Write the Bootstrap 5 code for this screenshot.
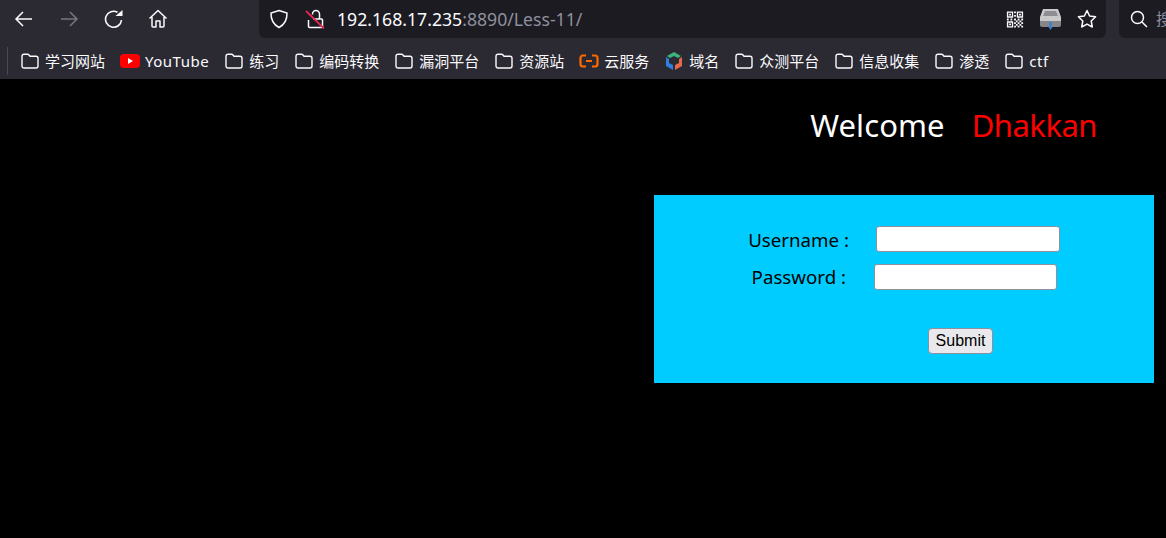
<!DOCTYPE html>
<html lang="zh">
<head>
<meta charset="utf-8">
<title>Less-11</title>
<link rel="stylesheet" href="https://cdn.jsdelivr.net/npm/bootstrap@5.3.0/dist/css/bootstrap.min.css">
<style>
html,body{height:100%;overflow:hidden}
body{background:#000;font-family:"Noto Sans","Noto Sans CJK SC",sans-serif;color:#000}
.chrome-top{height:42px;background:#2b2a33;color:#fbfbfe}
.tool-btn{width:45px;height:38px;flex:none}
.tool-btn svg,.url-icon svg{display:block}
.nav-group{width:259px;padding-left:1px;flex:none}
.url-field{width:847px;height:38px;background:#1c1b22;border-radius:0 0 6px 6px;padding-left:10px;padding-right:9px;flex:none}
.url-icon{flex:none;width:20px}
.url-text{font-size:17.65px;line-height:40px;margin-left:12px;white-space:nowrap;color:#fbfbfe}
.url-dim{color:#8f8f9d}
.search-field{width:60px;height:38px;background:#1c1b22;border-radius:0 0 0 6px;margin-left:13px;padding-left:11px;flex:none;overflow:hidden;white-space:nowrap;font-size:16px;color:#8f8f9d}
.marks{height:37px;background:#2b2a33;color:#fbfbfe;font-size:15px;padding-left:7px;white-space:nowrap}
.marks-sep{width:1px;height:28px;background:#4a4950;margin-right:13px}
.mark-item{gap:6px;margin-right:16px;line-height:20px}
.mark-item svg{flex:none;display:block}
.mark-item.gap-tight{gap:5px;margin-left:-1px}
.latin-label{letter-spacing:.5px}
.greeting{height:116px;padding-top:24px;padding-right:69px;font-size:31px;line-height:44px;gap:27px}
.greet-a{color:#fff;letter-spacing:.1px}
.greet-b{color:#f00;letter-spacing:-.5px}
.login-wrap{padding-right:12px}
.login-box{width:500px;height:188px;background:#0cf;padding-top:31px;font-size:18.7px}
.login-line{height:38px}
.login-line label{text-align:right;line-height:28px}
.login-line input{height:26px;border:1px solid #8f8f9d;border-radius:3px;background:#fff;padding:0 2px;outline:0}
.line-user label{width:195px;margin-right:27px}
.line-user input{width:184px}
.line-pass label{width:192px;margin-right:28px;line-height:26px!important}
.line-pass input{width:183px}
.submit-line{padding-left:274px;padding-top:26px}
.submit-go{width:65px;height:26px;padding:0;border:1px solid #8f8f9d;border-radius:4px;background:#e9e9ed;color:#000;font-size:16px;line-height:22px;font-family:"Liberation Sans",sans-serif}
</style>
</head>
<body>
<svg width="0" height="0" class="position-absolute">
<symbol id="folder" viewBox="0 0 18 16"><path d="M1 3.200C1 2 1.800 1.200 3 1.200h3.600c.6 0 1 .3 1.400.8l1 1.300h6c1.200 0 2 .8 2 2V13c0 1.200-.8 2-2 2H3c-1.200 0-2-.8-2-2z" fill="none" stroke="#fbfbfe" stroke-width="1.400"/></symbol>
</svg>

<header class="chrome-top d-flex align-items-start">
  <nav class="nav-group d-flex">
    <div class="tool-btn d-flex align-items-center justify-content-center"><svg width="20" height="20" viewBox="0 0 20 20" fill="none" stroke="#fbfbfe" stroke-width="1.500"><path d="M18 10H2M9 3l-7 7 7 7"/></svg></div>
    <div class="tool-btn d-flex align-items-center justify-content-center"><svg width="20" height="20" viewBox="0 0 20 20" fill="none" stroke="#77767e" stroke-width="1.500"><path d="M2 10h16M11 3l7 7-7 7"/></svg></div>
    <div class="tool-btn d-flex align-items-center justify-content-center"><svg width="20" height="20" viewBox="0 0 20 20" fill="none" stroke="#fbfbfe" stroke-width="1.600"><path d="M17.500 11A8 8 0 1 1 13.500 3.300"/><path d="M11.500 7h7V1z" fill="#fbfbfe" stroke="none"/></svg></div>
    <div class="tool-btn d-flex align-items-center justify-content-center"><svg width="20" height="20" viewBox="0 0 20 20" fill="none" stroke="#fbfbfe" stroke-width="1.500" stroke-linejoin="round"><path d="M.5 9.500 9 1.500l8.500 8M3 8v9c0 .7.400 1 1 1h3v-6h4v6h3c.6 0 1-.3 1-1V8"/></svg></div>
  </nav>
  <div class="url-field d-flex align-items-center">
    <div class="url-icon"><svg width="20" height="20" viewBox="0 0 20 20" fill="none" stroke="#fbfbfe" stroke-width="1.500"><path d="M10 1.500 18 4c.2 6.500-2.300 11.500-8 14.500C4.300 15.500 1.800 10.500 2 4z"/></svg></div>
    <div class="url-icon ms-3"><svg width="20" height="20" viewBox="0 0 20 20" fill="none"><path d="M8 10h8.500c.5 0 1 .5 1 1v6.500c0 .5-.5 1-1 1h-12c-.5 0-1-.5-1-1V11" stroke="#fbfbfe" stroke-width="1.500"/><path d="M7.500 5.500V5a3.500 3.500 0 0 1 7 0v5" stroke="#fbfbfe" stroke-width="1.500"/><path d="M1 2l18 17.500" stroke="#e22850" stroke-width="1.800"/></svg></div>
    <div class="url-text flex-grow-1">192.168.17.235<span class="url-dim">:8890/Less-11/</span></div>
    <div class="d-flex align-items-center">
      <svg width="18" height="19" viewBox="0 0 20 20" class="me-3"><path fill="#fbfbfe" d="M1 1h7v7H1zM12 1h7v7h-7zM1 12h7v7H1zM9 1h2v2H9zM9 5h2v2H9zM1 9h2v2H1zM5 9h2v2H5zM9 9h2v2H9zM13 9h2v2h-2zM17 9h2v2h-2zM11 11h2v2h-2zM15 11h2v2h-2zM9 13h2v2H9zM13 13h2v2h-2zM17 13h2v2h-2zM11 15h2v2h-2zM15 15h2v2h-2zM9 17h2v2H9zM13 17h2v2h-2zM17 17h2v2h-2z"/><path fill="#1c1b22" d="M2.500 2.500h4v4h-4zM13.500 2.500h4v4h-4zM2.500 13.500h4v4h-4z"/><path fill="#fbfbfe" d="M3.500 3.500h2v2h-2zM14.500 3.500h2v2h-2zM3.500 14.500h2v2h-2z"/></svg>
      <svg width="21" height="22" viewBox="0 0 21 22"><path fill="#c9c9cb" d="M3 1h15l3 8H0z"/><path fill="#8d8d92" d="M5 3h11l2 5H3z"/><path fill="#c9c9cb" d="M0 9h21v4H0z"/><path fill="#85858a" d="M0 13h21v4c0 1-.8 2-2 2H2c-1.200 0-2-1-2-2z"/><path fill="#2f7fe0" d="M9.500 14h2v5h1l-2 3-2-3h1z"/></svg>
      <svg width="20" height="20" viewBox="0 0 20 20" fill="none" stroke="#fbfbfe" stroke-width="1.500" stroke-linejoin="round" class="ms-3"><path d="m10 1.500 2.600 5.500 6 .8-4.400 4.200 1.100 6L10 15.100 4.700 18l1.100-6-4.400-4.200 6-.8z"/></svg>
    </div>
  </div>
  <div class="search-field d-flex align-items-center gap-2">
    <svg width="18" height="18" viewBox="0 0 18 18" fill="none" stroke="#fbfbfe" stroke-width="1.500" class="flex-shrink-0"><circle cx="7.500" cy="7.500" r="6"/><path d="m12 12 5 5"/></svg>
    <span>搜索</span>
  </div>
</header>

<div class="marks d-flex align-items-center">
  <div class="marks-sep"></div>
  <div class="mark-item d-flex align-items-center"><svg width="18" height="16"><use href="#folder"/></svg><span>学习网站</span></div>
  <div class="mark-item gap-tight d-flex align-items-center"><svg width="20" height="14" viewBox="0 0 20 14"><rect width="20" height="14" rx="4" fill="#f00"/><path d="M8 4v6l5-3z" fill="#fff"/></svg><span class="latin-label">YouTube</span></div>
  <div class="mark-item d-flex align-items-center"><svg width="18" height="16"><use href="#folder"/></svg><span>练习</span></div>
  <div class="mark-item d-flex align-items-center"><svg width="18" height="16"><use href="#folder"/></svg><span>编码转换</span></div>
  <div class="mark-item d-flex align-items-center"><svg width="18" height="16"><use href="#folder"/></svg><span>漏洞平台</span></div>
  <div class="mark-item d-flex align-items-center"><svg width="18" height="16"><use href="#folder"/></svg><span>资源站</span></div>
  <div class="mark-item gap-tight d-flex align-items-center"><svg width="20" height="14" viewBox="0 0 20 14" fill="none" stroke="#ff6a00" stroke-width="2.200"><path d="M7 1.500H4C2.500 1.500 1.500 2.500 1.500 4v6c0 1.500 1 2.500 2.500 2.500h3M13 1.500h3c1.500 0 2.500 1 2.500 2.500v6c0 1.500-1 2.500-2.500 2.500h-3M7 7h6" /></svg><span>云服务</span></div>
  <div class="mark-item d-flex align-items-center"><svg width="18" height="18" viewBox="0 0 18 18"><path fill="#3db27d" d="M9 0l7 4-3 2-4-2-4 2-3-2z"/><path fill="#2f7fe0" d="M1 5l3 2v4l4 2v5l-7-4z"/><path fill="#e8694a" d="M17 5l-3 2v4l-4 2v5l7-4z"/></svg><span>域名</span></div>
  <div class="mark-item d-flex align-items-center"><svg width="18" height="16"><use href="#folder"/></svg><span>众测平台</span></div>
  <div class="mark-item d-flex align-items-center"><svg width="18" height="16"><use href="#folder"/></svg><span>信息收集</span></div>
  <div class="mark-item d-flex align-items-center"><svg width="18" height="16"><use href="#folder"/></svg><span>渗透</span></div>
  <div class="mark-item d-flex align-items-center"><svg width="18" height="16"><use href="#folder"/></svg><span class="latin-label">ctf</span></div>
</div>

<main>
  <div class="greeting d-flex justify-content-end"><span class="greet-a">Welcome</span><span class="greet-b">Dhakkan</span></div>
  <div class="login-wrap d-flex justify-content-end">
    <form class="login-box" onsubmit="return false">
      <div class="login-line line-user d-flex align-items-start"><label for="uname">Username :</label><input id="uname" type="text"></div>
      <div class="login-line line-pass d-flex align-items-start"><label for="passwd">Password :</label><input id="passwd" type="password"></div>
      <div class="submit-line"><button class="submit-go d-block" type="submit">Submit</button></div>
    </form>
  </div>
</main>
<script src="https://cdn.jsdelivr.net/npm/bootstrap@5.3.0/dist/js/bootstrap.bundle.min.js"></script>
</body>
</html>
